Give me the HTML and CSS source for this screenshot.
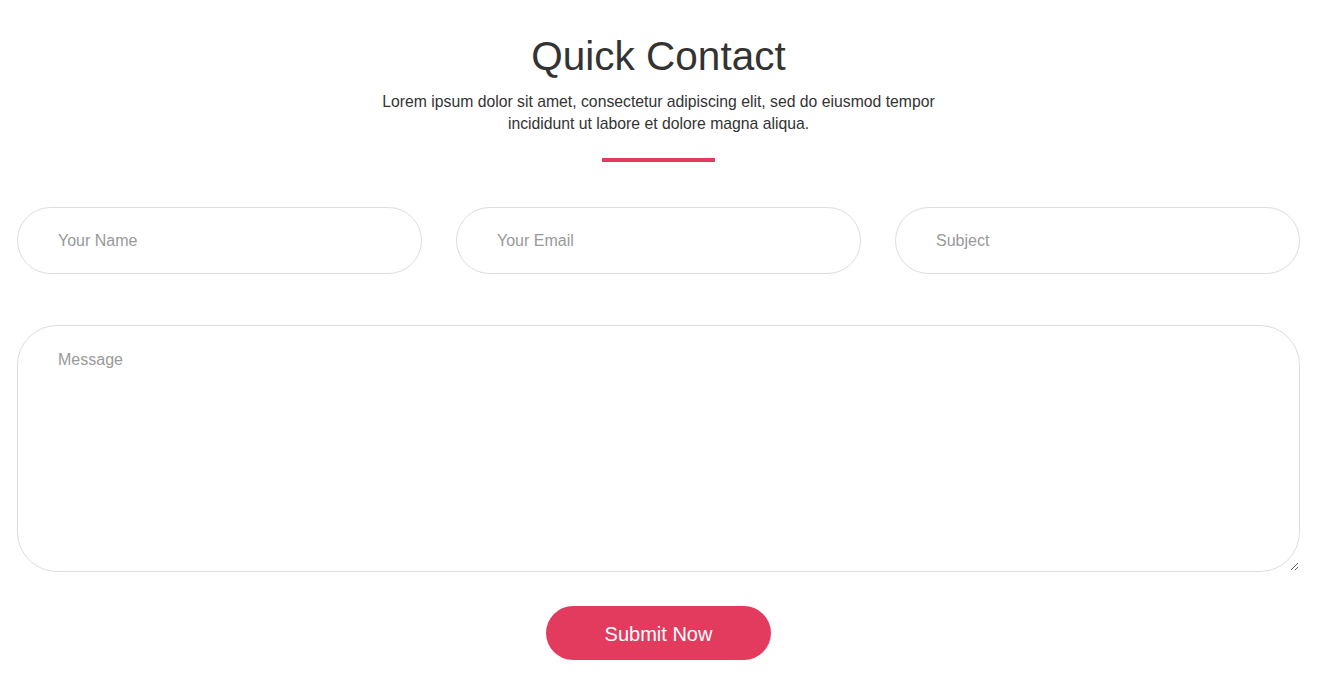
FILE: index.html
```html
<!DOCTYPE html>
<html>
<head>
<meta charset="utf-8">
<link rel="stylesheet" href="styles.css">
</head>
<body>
<section class="contact">
  <div class="heading">
    <h2 class="title">Quick Contact</h2>
    <p class="lead">Lorem ipsum dolor sit amet, consectetur adipiscing elit, sed do eiusmod tempor incididunt ut labore et dolore magna aliqua.</p>
    <span class="bar"></span>
  </div>
  <form class="form">
    <div class="row">
      <input class="field" type="text" placeholder="Your Name">
      <input class="field" type="email" placeholder="Your Email">
      <input class="field" type="text" placeholder="Subject">
    </div>
    <textarea class="message" placeholder="Message"></textarea>
    <div class="actions">
      <button class="submit" type="button">Submit Now</button>
    </div>
  </form>
</section>
</body>
</html>
```
FILE: styles.css
```css
* { box-sizing: border-box; }
body {
  margin: 0;
  background: #fff;
  font-family: "Liberation Sans", Arial, sans-serif;
  color: #333;
}
.contact {
  width: 1283px;
  margin-left: 17px;
  padding-top: 30px;
}
.heading {
  display: flex;
  flex-direction: column;
  align-items: center;
  text-align: center;
}
.title {
  margin: 0;
  font-size: 40.5px;
  font-weight: 400;
  line-height: 52px;
  color: #333;
}
.lead {
  margin: 9px 0 0;
  width: 580px;
  font-size: 15.75px;
  line-height: 22px;
  color: #333;
}
.bar {
  display: block;
  width: 113px;
  height: 4px;
  margin-top: 23px;
  background: #e33b5e;
}
.form {
  margin-top: 45px;
  display: flex;
  flex-direction: column;
}
.row {
  display: flex;
  gap: 34px;
}
.field {
  width: 405px;
  height: 67px;
  border: 1px solid #ddd;
  border-radius: 34px;
  padding: 0 40px;
  font-family: inherit;
  font-size: 16px;
  color: #333;
  outline: none;
}
.field::placeholder, .message::placeholder { color: #999; }
.message {
  margin-top: 51px;
  width: 1283px;
  height: 247px;
  border: 1px solid #ddd;
  border-radius: 40px;
  padding: 24px 40px;
  font-family: inherit;
  font-size: 16px;
  line-height: 20px;
  color: #333;
  outline: none;
}
.actions {
  display: flex;
  justify-content: center;
  margin-top: 34px;
}
.submit {
  width: 225px;
  height: 54px;
  border: 0;
  border-radius: 27px;
  padding: 3px 0 0;
  background: #e33b5e;
  color: #fff;
  font-family: inherit;
  font-size: 20px;
  cursor: pointer;
}
```
